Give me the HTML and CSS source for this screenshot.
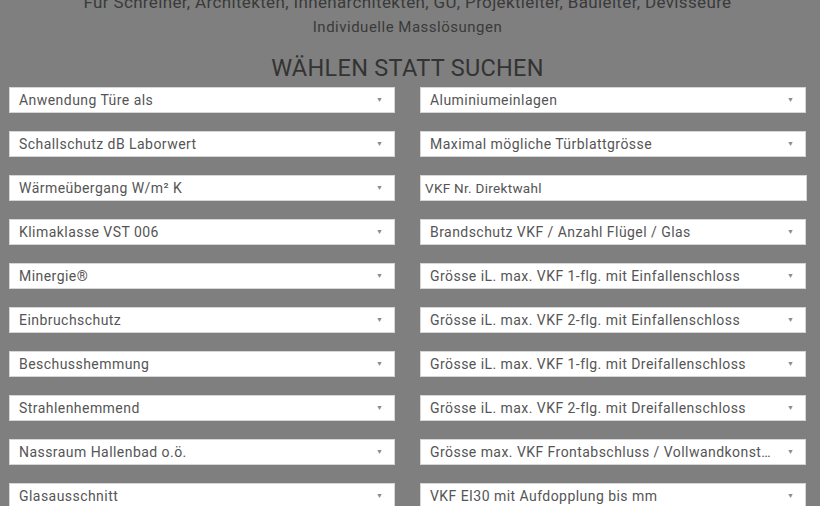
FILE: index.html
```html
<!DOCTYPE html>
<html lang="de">
<head>
<meta charset="utf-8">
<title>Wählen statt suchen</title>
<link rel="stylesheet" href="styles.css">
</head>
<body>
<div class="page">
  <p class="intro intro-main">Für Schreiner, Architekten, Innenarchitekten, GU, Projektleiter, Bauleiter, Devisseure</p>
  <p class="intro">Individuelle Masslösungen</p>
  <h2 class="title">WÄHLEN STATT SUCHEN</h2>
  <div class="grid">
    <div class="sel"><span class="label">Anwendung Türe als</span><span class="arrow">▼</span></div>
    <div class="sel"><span class="label">Aluminiumeinlagen</span><span class="arrow">▼</span></div>
    <div class="sel"><span class="label">Schallschutz dB Laborwert</span><span class="arrow">▼</span></div>
    <div class="sel"><span class="label">Maximal mögliche Türblattgrösse</span><span class="arrow">▼</span></div>
    <div class="sel"><span class="label">Wärmeübergang W/m² K</span><span class="arrow">▼</span></div>
    <div class="inp">VKF Nr. Direktwahl</div>
    <div class="sel"><span class="label">Klimaklasse VST 006</span><span class="arrow">▼</span></div>
    <div class="sel"><span class="label">Brandschutz VKF / Anzahl Flügel / Glas</span><span class="arrow">▼</span></div>
    <div class="sel"><span class="label">Minergie®</span><span class="arrow">▼</span></div>
    <div class="sel"><span class="label">Grösse iL. max. VKF 1-flg. mit Einfallenschloss</span><span class="arrow">▼</span></div>
    <div class="sel"><span class="label">Einbruchschutz</span><span class="arrow">▼</span></div>
    <div class="sel"><span class="label">Grösse iL. max. VKF 2-flg. mit Einfallenschloss</span><span class="arrow">▼</span></div>
    <div class="sel"><span class="label">Beschusshemmung</span><span class="arrow">▼</span></div>
    <div class="sel"><span class="label">Grösse iL. max. VKF 1-flg. mit Dreifallenschloss</span><span class="arrow">▼</span></div>
    <div class="sel"><span class="label">Strahlenhemmend</span><span class="arrow">▼</span></div>
    <div class="sel"><span class="label">Grösse iL. max. VKF 2-flg. mit Dreifallenschloss</span><span class="arrow">▼</span></div>
    <div class="sel"><span class="label">Nassraum Hallenbad o.ö.</span><span class="arrow">▼</span></div>
    <div class="sel"><span class="label">Grösse max. VKF Frontabschluss / Vollwandkonstruktion</span><span class="arrow">▼</span></div>
    <div class="sel"><span class="label">Glasausschnitt</span><span class="arrow">▼</span></div>
    <div class="sel"><span class="label">VKF EI30 mit Aufdopplung bis mm</span><span class="arrow">▼</span></div>
  </div>
</div>
</body>
</html>
```
FILE: styles.css
```css
html, body {
  margin: 0;
  padding: 0;
  background: #7f7f7f;
  height: 100%;
  overflow: hidden;
}
.page {
  font-family: Roboto, "Liberation Sans", sans-serif;
  padding: 0 14px 0 9px;
  margin-top: -10px;
}
.intro {
  margin: 0;
  text-align: center;
  font-size: 15px;
  line-height: 25px;
  letter-spacing: 0.5px;
  color: #3a3a3a;
}
.intro-main {
  font-size: 17px;
  letter-spacing: 0.35px;
  white-space: nowrap;
}
.title {
  margin: 0;
  padding-top: 13px;
  text-align: center;
  font-size: 23.5px;
  line-height: 30px;
  font-weight: 400;
  color: #333;
  letter-spacing: 0.3px;
}
.grid {
  margin-top: 4px;
  display: grid;
  grid-template-columns: 386px 386px;
  column-gap: 25px;
  row-gap: 18px;
}
.sel, .inp {
  box-sizing: border-box;
  height: 26px;
  background: #fff;
  border: 1px solid #d6d6d6;
  display: flex;
  align-items: center;
  color: #555;
  font-size: 14px;
  letter-spacing: 0.45px;
}
.sel {
  padding: 0 11px 0 9px;
  gap: 12px;
}
.label {
  flex: 1;
  min-width: 0;
  white-space: nowrap;
  overflow: hidden;
  text-overflow: ellipsis;
}
.arrow {
  font-size: 7px;
  letter-spacing: 0;
  color: #8a8a8a;
}
.inp {
  padding: 0 4px;
  font-size: 13.5px;
  letter-spacing: 0.3px;
  margin-right: -1px;
}
```
